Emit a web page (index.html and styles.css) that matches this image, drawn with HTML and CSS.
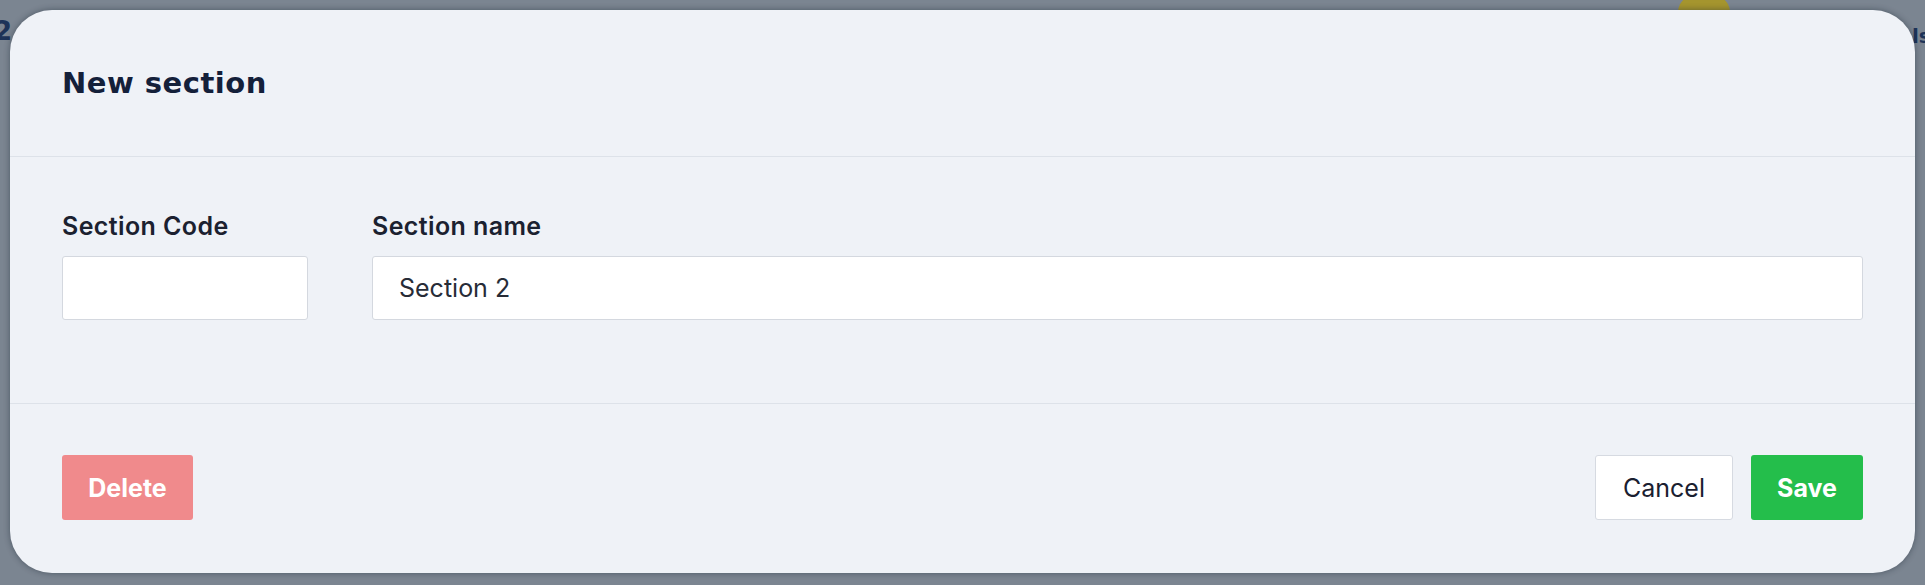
FILE: index.html
```html
<!DOCTYPE html>
<html lang="en">
<head>
<meta charset="utf-8">
<title>New section</title>
<link rel="stylesheet" href="styles.css">
</head>
<body>
<div class="backdrop">
  <span class="bg-num">2</span>
  <span class="bg-avatar"></span>
  <span class="bg-text">ls</span>
</div>
<div class="modal">
  <div class="modal-header">
    <h2 class="modal-title">New section</h2>
  </div>
  <div class="modal-body">
    <div class="field field-code">
      <label class="field-label">Section Code</label>
      <input class="field-input" type="text" value="">
    </div>
    <div class="field field-name">
      <label class="field-label">Section name</label>
      <input class="field-input" type="text" value="Section 2">
    </div>
  </div>
  <div class="modal-footer">
    <button class="btn btn-delete">Delete</button>
    <div class="footer-actions">
      <button class="btn btn-cancel">Cancel</button>
      <button class="btn btn-save">Save</button>
    </div>
  </div>
</div>
</body>
</html>
```
FILE: styles.css
```css
* { box-sizing: border-box; }
html, body { margin: 0; height: 100%; }
body {
  background: #7b8591;
  font-family: Inter, "Noto Sans", "Liberation Sans", sans-serif;
  padding: 10px 10px 12px 10px;
  position: relative;
  overflow: hidden;
}
.backdrop { position: absolute; inset: 0; }
.bg-num {
  position: absolute; left: -6px; top: 16px;
  font: 700 26px "DejaVu Sans", sans-serif; color: #1d3358;
}
.bg-avatar {
  position: absolute; left: 1678px; top: -8px;
  width: 52px; height: 40px; border-radius: 50%;
  background: #a5952e;
}
.bg-text {
  position: absolute; left: 1912px; top: 24px;
  font: 700 20px "DejaVu Sans", sans-serif; color: #1d3358;
}
.modal {
  position: relative;
  height: 563px;
  background: #eff2f7;
  border-radius: 42px;
  display: flex;
  flex-direction: column;
  box-shadow: 0 0 6px rgba(20, 30, 45, 0.45);
}
.modal-header {
  height: 147px;
  padding: 0 52px;
  display: flex;
  align-items: center;
  border-bottom: 1px solid #dde2e9;
}
.modal-title {
  margin: 0;
  font-family: "DejaVu Sans", sans-serif;
  font-weight: 700;
  font-size: 29px;
  letter-spacing: 0.5px;
  color: #14203a;
}
.modal-body {
  display: flex;
  gap: 64px;
  padding: 54px 52px 83px 52px;
  border-bottom: 1px solid #dde2e9;
}
.field { display: flex; flex-direction: column; gap: 15px; }
.field-code { width: 246px; }
.field-name { flex: 1; }
.field-label {
  font-size: 25px;
  line-height: 30px;
  font-weight: 600;
  letter-spacing: 0.4px;
  color: #1b2130;
}
.field-input {
  height: 64px;
  border: 1px solid #d4d8df;
  border-radius: 3px;
  background: #fff;
  padding: 0 26px;
  font-family: Inter, "Noto Sans", sans-serif;
  font-size: 25px;
  color: #272c37;
  outline: none;
}
.modal-footer {
  flex: 1;
  display: flex;
  align-items: center;
  justify-content: space-between;
  padding: 0 52px 2px 52px;
}
.footer-actions { display: flex; gap: 18px; }
.btn {
  height: 65px;
  border-radius: 3px;
  font-family: Inter, "Noto Sans", sans-serif;
  font-size: 25px;
  border: 1px solid transparent;
  cursor: pointer;
  padding: 0;
}
.btn-delete {
  width: 131px;
  background: #f08a8c;
  color: #fff;
  font-weight: 700;
}
.btn-cancel {
  width: 138px;
  background: #fff;
  border-color: #d6dae1;
  color: #1a2030;
  font-weight: 400;
}
.btn-save {
  width: 112px;
  background: #24be4b;
  color: #fff;
  font-weight: 700;
}
```
